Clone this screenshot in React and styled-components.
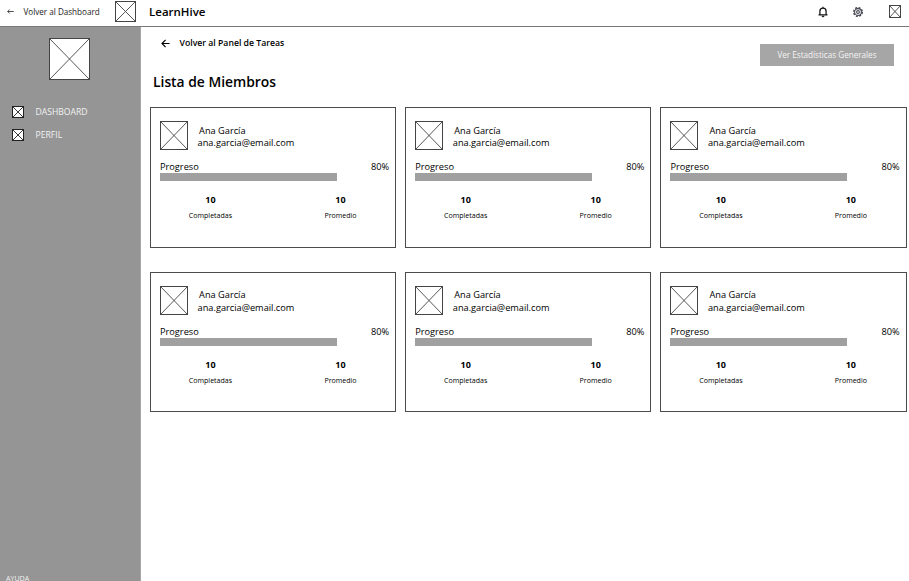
import React from "react";
import styled, { createGlobalStyle } from "styled-components";

const GlobalStyle = createGlobalStyle`
  * { box-sizing: border-box; }
  body { margin: 0; background: #fff; color: #000; font-family: "Open Sans", sans-serif; overflow: hidden; }
`;

const Page = styled.div`
  display: flex;
  flex-direction: column;
  width: 909px;
  height: 581px;
  overflow: hidden;
  white-space: nowrap;
`;

const TopBar = styled.header`
  display: flex;
  align-items: center;
  flex: none;
  height: 27px;
  padding: 0 8px 3px 7px;
  border-bottom: 1px solid #777;
`;

const TopBack = styled.a`
  display: flex;
  align-items: center;
  gap: 9.5px;
  width: 108px;
  font-size: 8.1px;
  line-height: 12px;
  color: #222;
`;

const Brand = styled.span`
  margin-left: 13px;
  font-size: 11.5px;
  font-weight: 600;
  line-height: 16px;
`;

const Actions = styled.div`
  display: flex;
  align-items: center;
  margin-left: auto;
`;

const ActionIcon = styled.svg`
  width: ${(p) => p.$size}px;
  height: ${(p) => p.$size}px;
  margin-right: ${(p) => p.$gap}px;
`;

const PlaceholderSvg = styled.svg`
  display: block;
  flex: none;
  background: #fff;
`;

const Body = styled.div`
  display: flex;
  flex: 1;
  min-height: 0;
`;

const Sidebar = styled.aside`
  display: flex;
  flex-direction: column;
  flex: none;
  width: 141px;
  padding-top: 11px;
  background: #959595;
  border-right: 1px solid #a6a6a6;
  color: #f2f2f2;
`;

const SidebarLogo = styled.div`
  margin: 0 0 20px 49px;
`;

const NavItem = styled.a`
  display: flex;
  align-items: center;
  gap: 11.5px;
  height: 23px;
  padding-left: 12px;
  font-size: 8.65px;
`;

const Help = styled.a`
  margin: auto 0 -3px 6px;
  font-size: 7.1px;
  line-height: 12px;
`;

const Main = styled.main`
  flex: 1;
  min-width: 0;
  padding: 10px 0 0 9px;
`;

const Heading = styled.div`
  display: flex;
  justify-content: space-between;
  height: 70px;
`;

const BackLink = styled.a`
  display: flex;
  align-items: center;
  gap: 9.5px;
  height: 13px;
  padding-left: 11px;
  font-size: 8.7px;
  font-weight: 600;
  line-height: 13px;
`;

const Title = styled.h1`
  margin: 22px 0 0 3px;
  font-size: 13.85px;
  font-weight: 600;
  line-height: 20px;
`;

const StatsButton = styled.button`
  width: 134px;
  height: 22px;
  margin: 7px 15px 0 0;
  padding: 0 0 1px;
  border: 0;
  background: #a6a6a6;
  color: #f4f4f4;
  font: 8.12px "Open Sans", sans-serif;
`;

const Grid = styled.div`
  display: grid;
  grid-template-columns: repeat(3, 246.2px);
  grid-auto-rows: 140.5px;
  gap: 24px 9px;
`;

const Card = styled.article`
  padding: 13px 6px 0 9px;
  border: 1px solid #4c4c4c;
`;

const Person = styled.div`
  display: flex;
  height: 29px;
`;

const Identity = styled.div`
  padding: 3.5px 0 0 9.6px;
  font-size: 9.23px;
  line-height: 12.8px;
`;

const Name = styled.div`
  padding-left: 1.5px;
`;

const ProgressLabel = styled.div`
  display: flex;
  justify-content: space-between;
  margin-top: 10px;
  font-size: 9.23px;
  line-height: 13px;
`;

const Track = styled.div`
  width: 221px;
  height: 8px;
`;

const Fill = styled.div`
  height: 100%;
  background: #a0a0a0;
`;

const Stats = styled.div`
  display: grid;
  grid-template-columns: 101px 101px;
  justify-content: start;
  column-gap: 29px;
  margin-top: 12px;
  text-align: center;
`;

const StatValue = styled.div`
  font-size: 9px;
  font-weight: 700;
  line-height: 14px;
`;

const StatLabel = styled.div`
  margin-top: 2px;
  font-size: 7.05px;
  line-height: 12.6px;
`;

function Placeholder({ w, h, stroke = "#444" }) {
  return (
    <PlaceholderSvg width={w} height={h} viewBox={`0 0 ${w} ${h}`} fill="none" stroke={stroke}>
      <rect x=".5" y=".5" width={w - 1} height={h - 1} />
      <path d={`M.5 .5L${w - 0.5} ${h - 0.5}M${w - 0.5} .5L.5 ${h - 0.5}`} strokeWidth=".9" />
    </PlaceholderSvg>
  );
}

function LongArrow() {
  return (
    <svg width="7" height="7" viewBox="0 0 7 7" fill="none" stroke="#222" strokeWidth=".8">
      <path d="M6.7 3.5H.8M2.7 1.5L.7 3.5L2.7 5.5" />
    </svg>
  );
}

function Arrow() {
  return (
    <svg width="9" height="9" viewBox="0 0 9 9" fill="none" stroke="#000" strokeWidth="1.15">
      <path d="M8.6 4.5H1M4.6 .9L1 4.5L4.6 8.1" />
    </svg>
  );
}

function Bell() {
  return (
    <ActionIcon $size={12} $gap={23} viewBox="0 0 24 24" fill="none" stroke="#111" strokeWidth="2.5">
      <path d="M3 17.5h18M5.8 17V10.5a6.2 6.2 0 0 1 12.4 0V17M12 1.5v3" />
      <path d="M9.8 20a2.2 2 0 0 0 4.4 0z" fill="#111" strokeWidth="1" />
    </ActionIcon>
  );
}

function Gear() {
  return (
    <ActionIcon $size={12} $gap={25} viewBox="0 0 24 24" fill="none" stroke="#464652">
      <circle cx="12" cy="12" r="6.8" strokeWidth="2.2" />
      <circle cx="12" cy="12" r="8.6" strokeWidth="2.8" strokeDasharray="4 2.75" />
      <circle cx="12" cy="12" r="2.8" strokeWidth="2.2" />
    </ActionIcon>
  );
}

function MemberCard({ member }) {
  return (
    <Card>
      <Person>
        <Placeholder w={28} h={29} />
        <Identity>
          <Name>{member.name}</Name>
          <div>{member.email}</div>
        </Identity>
      </Person>
      <ProgressLabel>
        <span>Progreso</span>
        <span>{member.progress}%</span>
      </ProgressLabel>
      <Track>
        <Fill style={{ width: `${member.progress}%` }} />
      </Track>
      <Stats>
        <div>
          <StatValue>{member.completed}</StatValue>
          <StatLabel>Completadas</StatLabel>
        </div>
        <div>
          <StatValue>{member.average}</StatValue>
          <StatLabel>Promedio</StatLabel>
        </div>
      </Stats>
    </Card>
  );
}

const members = Array.from({ length: 6 }, (_, id) => ({
  id,
  name: "Ana García",
  email: "ana.garcia@email.com",
  progress: 80,
  completed: 10,
  average: 10,
}));

export default function App() {
  return (
    <Page>
      <GlobalStyle />
      <TopBar>
        <TopBack>
          <LongArrow />
          Volver al Dashboard
        </TopBack>
        <Placeholder w={21} h={21} />
        <Brand>LearnHive</Brand>
        <Actions>
          <Bell />
          <Gear />
          <Placeholder w={12} h={13} />
        </Actions>
      </TopBar>
      <Body>
        <Sidebar>
          <SidebarLogo>
            <Placeholder w={41} h={42} />
          </SidebarLogo>
          <NavItem>
            <Placeholder w={12} h={12} stroke="#222" />
            DASHBOARD
          </NavItem>
          <NavItem>
            <Placeholder w={12} h={12} stroke="#222" />
            PERFIL
          </NavItem>
          <Help>AYUDA</Help>
        </Sidebar>
        <Main>
          <Heading>
            <div>
              <BackLink>
                <Arrow />
                Volver al Panel de Tareas
              </BackLink>
              <Title>Lista de Miembros</Title>
            </div>
            <StatsButton>Ver Estadísticas Generales</StatsButton>
          </Heading>
          <Grid>
            {members.map((member) => (
              <MemberCard key={member.id} member={member} />
            ))}
          </Grid>
        </Main>
      </Body>
    </Page>
  );
}
